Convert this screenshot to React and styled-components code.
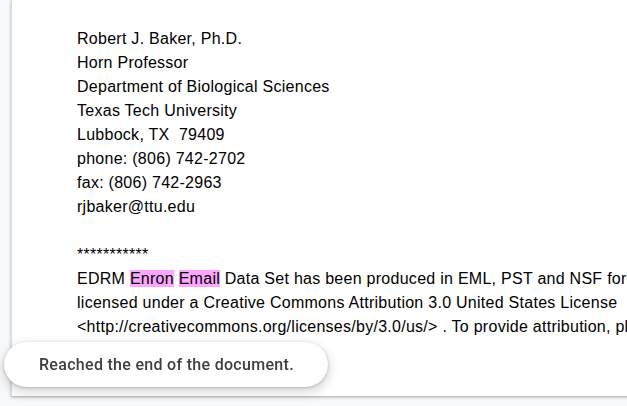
import styled, { createGlobalStyle } from "styled-components";

const GlobalStyle = createGlobalStyle`
  html, body {
    margin: 0;
    padding: 0;
    background: #f8f9fa;
    overflow: hidden;
    height: 100%;
  }
`;

const Page = styled.div`
  padding-left: 11px;
  height: 406px;
  overflow: hidden;
`;

const Sheet = styled.div`
  width: 760px;
  background: #ffffff;
  border-left: 1px solid #dadce0;
  box-shadow: 0 1px 2px rgba(60, 64, 67, 0.3), 0 2px 4px rgba(60, 64, 67, 0.15);
  padding: 27px 0 57px 65px;
`;

const Body = styled.div`
  font-family: "Liberation Sans", Arial, sans-serif;
  font-size: 16px;
  line-height: 24px;
  letter-spacing: 0.27px;
  color: #000000;
  white-space: pre;
`;

const Mark = styled.span`
  background: #fda6fd;
`;

const Toast = styled.div`
  position: fixed;
  left: 4px;
  top: 342px;
  width: 324px;
  height: 45px;
  box-sizing: border-box;
  display: flex;
  align-items: center;
  padding-left: 35px;
  background: #ffffff;
  border-radius: 23px;
  box-shadow: 0 1px 3px rgba(60, 64, 67, 0.3), 0 4px 8px 3px rgba(60, 64, 67, 0.15);
  font-family: Roboto, "Liberation Sans", sans-serif;
  font-size: 16px;
  font-weight: 500;
  letter-spacing: 0.3px;
  color: #3c4043;
`;

const lines = [
  "Robert J. Baker, Ph.D.",
  "Horn Professor",
  "Department of Biological Sciences",
  "Texas Tech University",
  "Lubbock, TX  79409",
  "phone: (806) 742-2702",
  "fax: (806) 742-2963",
  "rjbaker@ttu.edu",
  "",
  "***********",
];

const App = () => (
  <>
    <GlobalStyle />
    <Page>
      <Sheet>
        <Body>
          {lines.join("\n")}
          {"\n"}EDRM <Mark>Enron</Mark> <Mark>Email</Mark> Data Set has been produced in EML, PST and NSF format by ZL Technologies, Inc.
          {"\n"}licensed under a Creative Commons Attribution 3.0 United States License
          {"\n"}&lt;http://creativecommons.org/licenses/by/3.0/us/&gt; . To provide attribution, please credit ZL Technologies, Inc.
        </Body>
      </Sheet>
    </Page>
    <Toast>Reached the end of the document.</Toast>
  </>
);

export default App;
